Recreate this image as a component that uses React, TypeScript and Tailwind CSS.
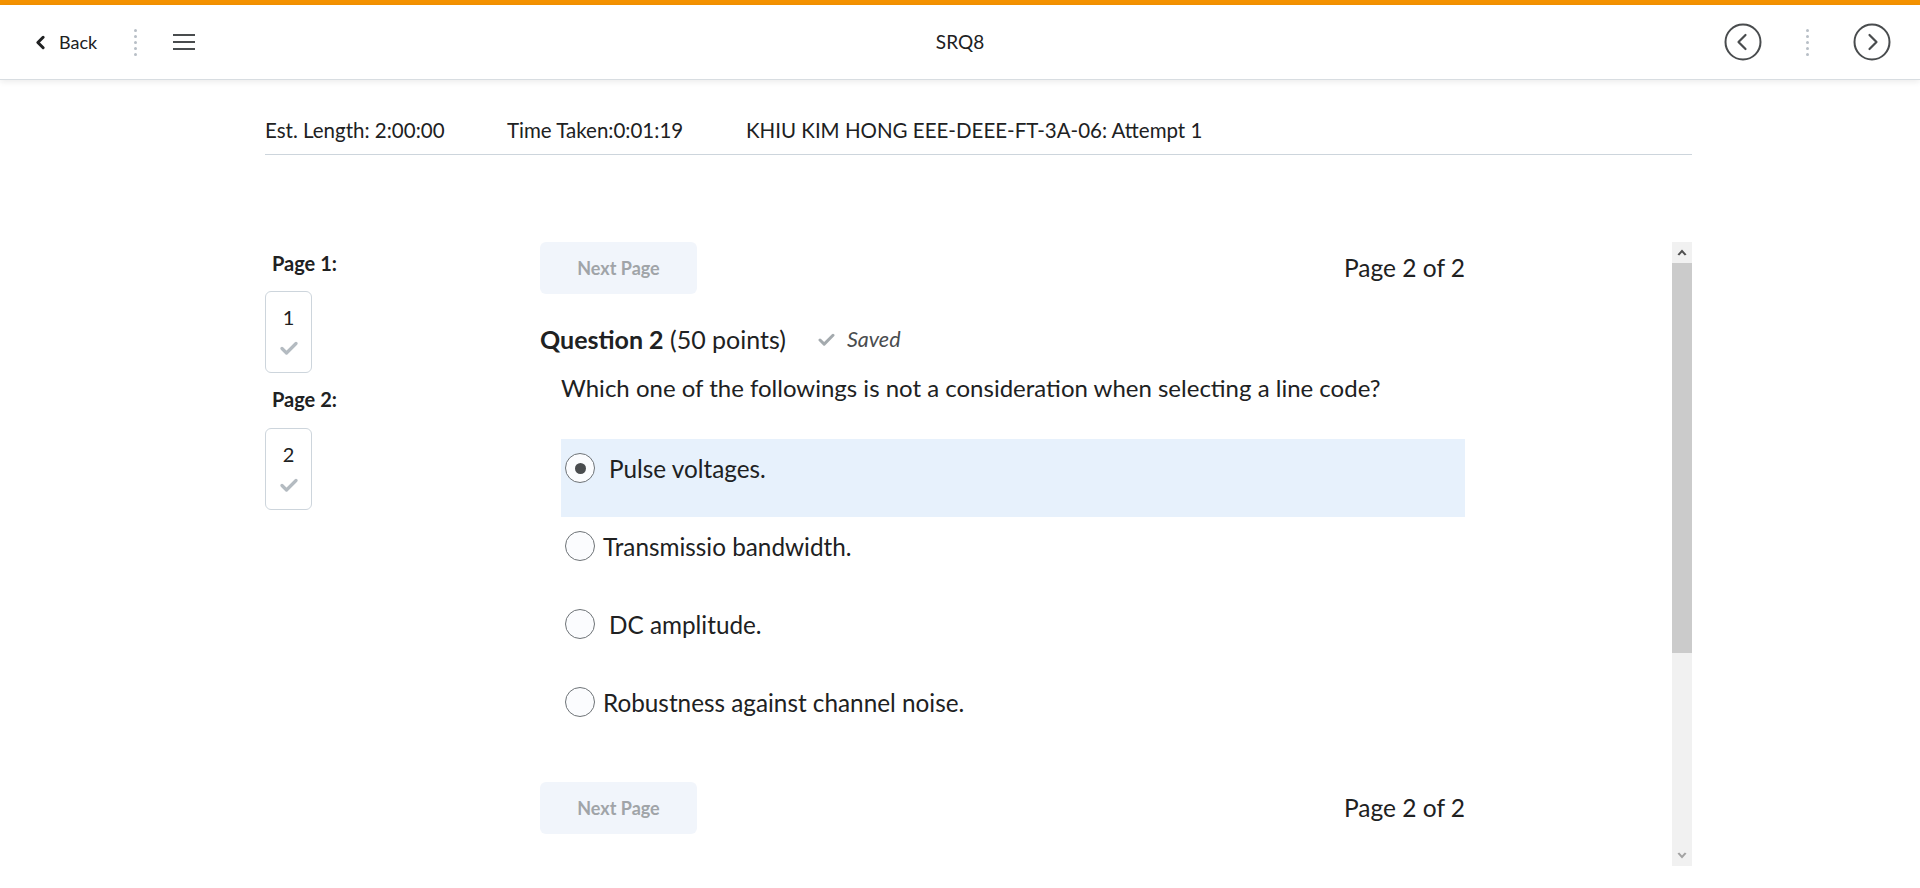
import { ChevronLeft } from "lucide-react";

const options = [
  { id: 1, label: "Pulse voltages.", selected: true, gap: "gap-[14px]" },
  { id: 2, label: "Transmissio bandwidth.", selected: false, gap: "gap-[8px]" },
  { id: 3, label: "DC amplitude.", selected: false, gap: "gap-[14px]" },
  { id: 4, label: "Robustness against channel noise.", selected: false, gap: "gap-[8px]" },
];

function DotDivider() {
  return (
    <div className="flex flex-col gap-[3px]">
      {[0, 1, 2, 3, 4].map((i) => (
        <span key={i} className="block h-[3px] w-[3px] rounded-full bg-[#b8bfc6]" />
      ))}
    </div>
  );
}

function CircleArrow({ dir }: { dir: "left" | "right" }) {
  return (
    <svg width="38" height="38" viewBox="0 0 38 38" fill="none">
      <circle cx="19" cy="19" r="17.5" stroke="#494c4e" strokeWidth="2" />
      {dir === "left" ? (
        <polyline points="21.5,12 14.5,19 21.5,26" stroke="#494c4e" strokeWidth="2.2" strokeLinecap="round" strokeLinejoin="round" />
      ) : (
        <polyline points="16.5,12 23.5,19 16.5,26" stroke="#494c4e" strokeWidth="2.2" strokeLinecap="round" strokeLinejoin="round" />
      )}
    </svg>
  );
}

function Tick({ className = "" }: { className?: string }) {
  return (
    <svg className={className} viewBox="0 0 18 14" fill="none">
      <polyline points="2,7.5 6.5,12 16,2.5" stroke="currentColor" strokeWidth="3.2" strokeLinecap="round" strokeLinejoin="round" />
    </svg>
  );
}

function NextPageRow() {
  return (
    <div className="flex items-center justify-between">
      <button className="h-[52px] w-[157px] rounded-[6px] bg-[#f1f5fb] text-[18px] font-bold text-[#a0a4a8]">
        Next Page
      </button>
      <span className="text-[24.5px] text-[#202122]">Page 2 of 2</span>
    </div>
  );
}

function PageBox({ n }: { n: number }) {
  return (
    <div className="flex h-[82px] w-[47px] flex-col items-center rounded-[6px] border border-[#cdd5dc] pt-[12px]">
      <span className="text-[20px] leading-[26px] text-[#202122]">{n}</span>
      <Tick className="mt-[11px] h-[14px] w-[18px] text-[#b4bbc1]" />
    </div>
  );
}

function Scrollbar() {
  return (
    <div className="mt-[87px] flex h-[624px] w-[20px] flex-col bg-[#f1f1f1]">
      <div className="flex h-[21px] items-center justify-center">
        <svg width="10" height="7" viewBox="0 0 10 7">
          <polygon points="5,0.5 9.5,5.5 7.8,6.5 5,3.5 2.2,6.5 0.5,5.5" fill="#505050" />
        </svg>
      </div>
      <div className="h-[390px] bg-[#cbcbcb]" />
      <div className="flex-1" />
      <div className="flex h-[21px] items-center justify-center">
        <svg width="10" height="7" viewBox="0 0 10 7">
          <polygon points="5,6.5 9.5,1.5 7.8,0.5 5,3.5 2.2,0.5 0.5,1.5" fill="#a3a3a3" />
        </svg>
      </div>
    </div>
  );
}

export default function App() {
  return (
    <div className="flex h-[888px] flex-col overflow-hidden bg-white font-['Lato',sans-serif] text-[#202122]">
      {/* top accent */}
      <div className="h-[5px] bg-[#f49200]" />

      {/* Header */}
      <header className="relative z-10 grid h-[75px] grid-cols-[1fr_auto_1fr] items-center border-b border-[#d8dde1] bg-white shadow-[0_2px_6px_rgba(0,0,0,0.08)]">
        <div className="flex items-center pl-[30px]">
          <ChevronLeft className="h-[21px] w-[21px] text-[#202122]" strokeWidth={3.5} />
          <span className="ml-[8px] text-[18px] text-[#202122]">Back</span>
          <div className="ml-[37px]">
            <DotDivider />
          </div>
          <div className="ml-[36px] flex w-[22px] flex-col gap-[5px]">
            <span className="block h-[2px] bg-[#494c4e]" />
            <span className="block h-[2px] bg-[#494c4e]" />
            <span className="block h-[2px] bg-[#494c4e]" />
          </div>
        </div>

        <div className="text-[19px] text-[#202122]">SRQ8</div>

        <div className="flex items-center justify-end gap-[44px] pr-[29px]">
          <CircleArrow dir="left" />
          <DotDivider />
          <CircleArrow dir="right" />
        </div>
      </header>

      {/* Body */}
      <div className="ml-[265px] w-[1427px]">
        {/* Info row */}
        <div className="flex border-b border-[#cdd5dc] pt-[38px] pb-[11px] text-[20.5px] leading-[25px] text-[#202122]">
          <span className="w-[242px]">Est. Length: 2:00:00</span>
          <span className="w-[239px]">Time Taken:0:01:19</span>
          <span>KHIU KIM HONG EEE-DEEE-FT-3A-06: Attempt 1</span>
        </div>

        <div className="flex">
          {/* Page navigation */}
          <nav className="w-[255px] pt-[96px]">
            <div className="pl-[7px] text-[20px] font-bold leading-[24px]">Page 1:</div>
            <div className="mt-[16px]">
              <PageBox n={1} />
            </div>
            <div className="mt-[14px] pl-[7px] text-[20px] font-bold leading-[24px]">Page 2:</div>
            <div className="mt-[17px]">
              <PageBox n={2} />
            </div>
          </nav>

          {/* Question frame */}
          <div className="mt-[87px] h-[624px] flex-1 overflow-hidden">
            <div className="w-[945px] pl-[20px]">
              <NextPageRow />

              <div className="mt-[29px] flex items-center">
                <h2 className="text-[25px] leading-[32px]">
                  <span className="font-bold">Question 2</span> (50 points)
                </h2>
                <Tick className="ml-[32px] h-[13px] w-[17px] text-[#a4aaae]" />
                <span className="ml-[12px] text-[21.5px] italic text-[#494c4e]">Saved</span>
              </div>

              <p className="mt-[18px] pl-[21px] text-[24px] leading-[30px]">
                Which one of the followings is not a consideration when selecting a line code?
              </p>

              <div className="mt-[36px] ml-[21px]">
                {options.map((o) => (
                  <label
                    key={o.id}
                    className={`flex h-[78px] items-start pt-[14px] pl-[4px] ${o.gap} ${
                      o.selected ? "bg-[#e7f1fc]" : ""
                    }`}
                  >
                    <span className="flex h-[30px] w-[30px] shrink-0 items-center justify-center rounded-full border border-[#6e7377] bg-[#fbfcfe]">
                      {o.selected && <span className="block h-[11px] w-[11px] rounded-full bg-[#494c4e]" />}
                    </span>
                    <span className="text-[24.3px] leading-[32px]">{o.label}</span>
                  </label>
                ))}
              </div>

              <div className="mt-[31px]">
                <NextPageRow />
              </div>
            </div>
          </div>

          <Scrollbar />
        </div>
      </div>
    </div>
  );
}
